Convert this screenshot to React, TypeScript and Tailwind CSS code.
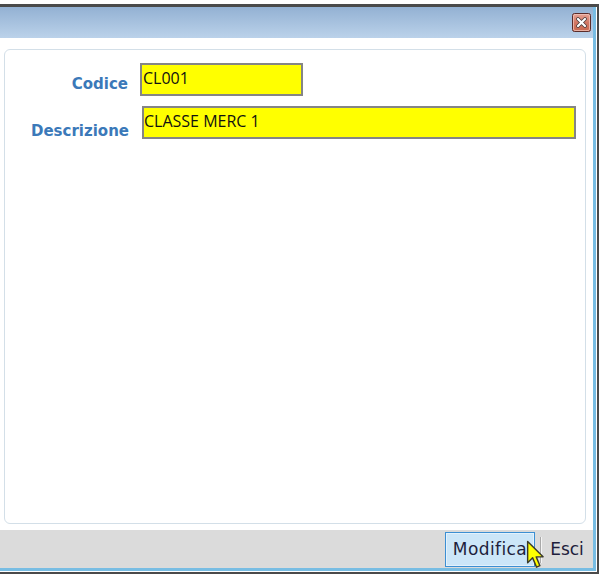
import React from 'react';

const labelCls = "font-['DejaVu_Sans',sans-serif] font-bold text-[15px] leading-[18px] text-[#3b79b9] text-right";
const fieldCls = "h-[33px] border-2 border-[#858585] bg-[#ffff00] pt-[3px] font-['Open_Sans',sans-serif] text-[16px] leading-[20px] text-[#111]";
const btnText = "font-['DejaVu_Sans',sans-serif] text-[17px] text-[#1e1e3c]";

const CloseButton = () => (
  <svg width="19" height="19" viewBox="0 0 19 19">
    <defs>
      <linearGradient id="cb" x1="0" y1="0" x2="0" y2="1">
        <stop offset="0" stopColor="#e8a597" />
        <stop offset="0.5" stopColor="#d27764" />
        <stop offset="1" stopColor="#c9684f" />
      </linearGradient>
    </defs>
    <rect x="0.5" y="0.5" width="18" height="18" rx="2" fill="url(#cb)" stroke="#5b2c2a" />
    <rect x="1.5" y="1.5" width="16" height="16" rx="1.5" fill="none" stroke="#f0c2b8" strokeWidth="0.8" />
    <path d="M6 6 L13 13 M13 6 L6 13" stroke="#4a3a3a" strokeWidth="3.8" strokeLinecap="round" />
    <path d="M6 6 L13 13 M13 6 L6 13" stroke="#ffffff" strokeWidth="2.2" strokeLinecap="round" />
  </svg>
);

const Cursor = () => (
  <svg width="19" height="30" viewBox="0 0 13 21" className="absolute left-[526px] top-[540px]">
    <path d="M1 1 L1 16 L4.5 12.5 L7.2 19 L9.6 18 L7 11.8 L11.8 11.8 Z" fill="#ffff00" stroke="#3a3a2a" strokeWidth="1" strokeLinejoin="round" />
  </svg>
);

export default function App() {
  return (
    <div className="relative w-[603px] h-[577px] bg-white pt-[4px]">
      <div className="w-[599px] h-[570px] border-t-[3px] border-r-2 border-b-2 border-[#4a4a4a]">
        <div className="h-full pr-[1px] pb-[1px] bg-white">
          <div className="h-full flex flex-col border-r-[3px] border-b-[3px] border-[#78bde3]">
            <div className="h-[31px] flex justify-end pt-[6px] pr-[2px] bg-gradient-to-b from-[#93b1d3] to-[#bbd2ea]">
              <CloseButton />
            </div>
            <div className="h-[492px] bg-white pt-[11px] pl-[4px] pr-[7px] pb-[6px]">
              <div className="h-full border border-[#d3dfe8] rounded-[6px] bg-white pt-[13px]">
                <div className="flex items-start">
                  <div className={`w-[124px] pt-[12px] pr-[1px] ${labelCls}`}>Codice</div>
                  <div className={`ml-[11px] w-[163px] pl-[1px] ${fieldCls}`}>CL001</div>
                </div>
                <div className="flex items-start mt-[10px]">
                  <div className={`w-[124px] pt-[16px] ${labelCls}`}>Descrizione</div>
                  <div className={`ml-[13px] w-[434px] pl-[0px] ${fieldCls}`}>CLASSE MERC 1</div>
                </div>
              </div>
            </div>
            <div className="h-[38px] bg-[#dbdbdb] flex justify-end items-start pt-[2px] pr-[3px]">
              <div className="w-[90px] h-[35px] border border-[#3c8fd3] bg-[#cce6f8] shadow-[inset_0_0_0_1px_#e4f2fc] flex items-center justify-center">
                <span className={`${btnText} tracking-[0.4px]`}>Modifica</span>
              </div>
              <div className="ml-[5px] mt-[5px] h-[26px] w-[2px] border-l border-r border-l-[#a9a9a9] border-r-[#f5f5f5]" />
              <div className="w-[48px] h-[35px] flex items-center justify-center pl-[2px]">
                <span className={btnText}>Esci</span>
              </div>
            </div>
          </div>
        </div>
      </div>
      <Cursor />
    </div>
  );
}
